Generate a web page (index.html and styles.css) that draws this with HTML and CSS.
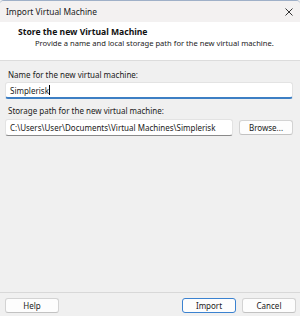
FILE: index.html
```html
<!DOCTYPE html>
<html>
<head>
<meta charset="utf-8">
<link rel="stylesheet" href="styles.css">
</head>
<body>
<div class="window">
  <div class="titlebar">
    <span class="title">Import Virtual Machine</span>
    <svg class="close" width="8" height="8" viewBox="0 0 8 8"><path d="M0.5 0.5 L7.5 7.5 M7.5 0.5 L0.5 7.5" stroke="#333" stroke-width="1"/></svg>
  </div>
  <div class="header">
    <div class="h-title">Store the new Virtual Machine</div>
    <div class="h-desc">Provide a name and local storage path for the new virtual machine.</div>
  </div>
  <div class="content">
    <div class="label">Name for the new virtual machine:</div>
    <div class="input focused"><span>Simplerisk</span><span class="caret"></span></div>
    <div class="label label2">Storage path for the new virtual machine:</div>
    <div class="row">
      <div class="input path"><span>C:\Users\User\Documents\Virtual Machines\Simplerisk</span></div>
      <div class="btn browse">Browse...</div>
    </div>
  </div>
  <div class="footer">
    <div class="btn">Help</div>
    <div class="right">
      <div class="btn default">Import</div>
      <div class="btn">Cancel</div>
    </div>
  </div>
</div>
</body>
</html>
```
FILE: styles.css
```css
html, body {
  margin: 0;
  padding: 0;
  width: 300px;
  height: 316px;
  overflow: hidden;
  background: #f0f0f0;
}
.window {
  width: 300px;
  height: 316px;
  display: flex;
  flex-direction: column;
  font-family: "Noto Sans", "Open Sans", sans-serif;
  font-size: 8px;
  color: #1a1a1a;
  background: #f0f0f0;
  border-top: 1px solid #9fb0c8;
  box-sizing: border-box;
  border-radius: 4px 4px 0 0;
}
.titlebar {
  height: 21px;
  flex: none;
  display: flex;
  align-items: center;
  justify-content: space-between;
  padding: 0 7px 0 6px;
  background: #f3f1f1;
  border-radius: 4px 4px 0 0;
}
.title {
  font-size: 8.4px;
  color: #222;
}
.close {
  display: block;
}
.header {
  height: 39px;
  flex: none;
  box-sizing: border-box;
  background: #ffffff;
  border-bottom: 1px solid #dcdcdc;
  padding: 5px 0 0 18px;
  line-height: 11px;
}
.h-title {
  font-weight: bold;
  font-size: 8.6px;
  color: #111;
}
.h-desc {
  padding-left: 17px;
  font-size: 7.6px;
  color: #222;
}
.content {
  padding: 8px 7px 0 5px;
  display: flex;
  flex-direction: column;
}
.label {
  line-height: 11px;
  padding-left: 3px;
  margin-bottom: 2px;
}
.label2 {
  margin-top: 6px;
  margin-bottom: 3px;
}
.input {
  height: 17px;
  box-sizing: border-box;
  background: #ffffff;
  border: 1px solid #e3e3e3;
  border-bottom: 1px solid #8a8a8a;
  border-radius: 3px;
  display: flex;
  align-items: center;
  padding-left: 4px;
  white-space: nowrap;
  overflow: hidden;
}
.input.focused {
  border-bottom: 2px solid #3d7fc4;
}
.caret {
  display: inline-block;
  width: 1px;
  height: 10px;
  background: #000;
  margin-left: 0;
}
.row {
  display: flex;
  gap: 6px;
}
.path {
  width: 228px;
  flex: none;
}
.btn {
  width: 54px;
  height: 15px;
  box-sizing: border-box;
  border: 1px solid #d3d3d3;
  border-bottom-color: #c2c2c2;
  border-radius: 3px;
  background: #fdfdfd;
  display: flex;
  align-items: center;
  justify-content: center;
  color: #1a1a1a;
}
.browse {
  margin-top: 1px;
}
.footer {
  margin-top: auto;
  height: 24px;
  flex: none;
  box-sizing: border-box;
  border-top: 1px solid #d8d8d8;
  padding: 5px 4px 0 5px;
  display: flex;
  justify-content: space-between;
}
.right {
  display: flex;
  gap: 6px;
}
.default {
  border: 1px solid #3b82d0;
}
```
